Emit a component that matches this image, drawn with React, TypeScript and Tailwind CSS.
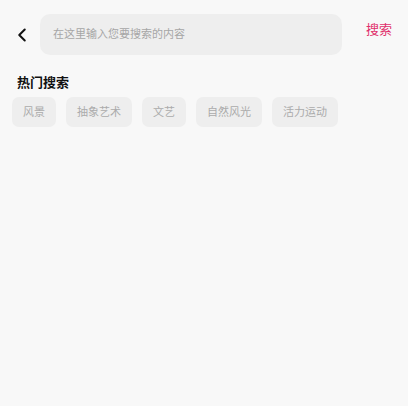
import { ChevronLeft } from "lucide-react";

const HOT_TAGS = ["风景", "抽象艺术", "文艺", "自然风光", "活力运动"];

export default function App() {
  return (
    <div
      className="h-[406px] w-full bg-[#f8f8f8]"
      style={{ fontFamily: '"Noto Sans", "Noto Sans CJK SC", sans-serif' }}
    >
      {/* 顶部搜索栏 */}
      <div className="flex items-center pt-[14px]">
        <button className="flex w-[40px] justify-center pl-[4px] text-[#111]">
          <ChevronLeft size={22} strokeWidth={2.2} />
        </button>
        <div className="flex h-[41px] w-[302px] items-center rounded-[10px] bg-[#eeeeee] px-[13px]">
          <span className="text-[11px] text-[#a6a6a6]">在这里输入您要搜索的内容</span>
        </div>
        <span className="mb-[9px] ml-[24px] text-[13px] text-[#e0306c]">搜索</span>
      </div>

      {/* 热门搜索 */}
      <div className="mt-[16px] px-[17px] text-[13px] font-bold leading-[22px] text-[#111]">
        热门搜索
      </div>
      <div className="mt-[4px] flex gap-[10px] px-[12px]">
        {HOT_TAGS.map((tag) => (
          <span
            key={tag}
            className="flex h-[30px] items-center rounded-[7px] bg-[#eeeeee] px-[11px] text-[11px] text-[#ababab]"
          >
            {tag}
          </span>
        ))}
      </div>
    </div>
  );
}
